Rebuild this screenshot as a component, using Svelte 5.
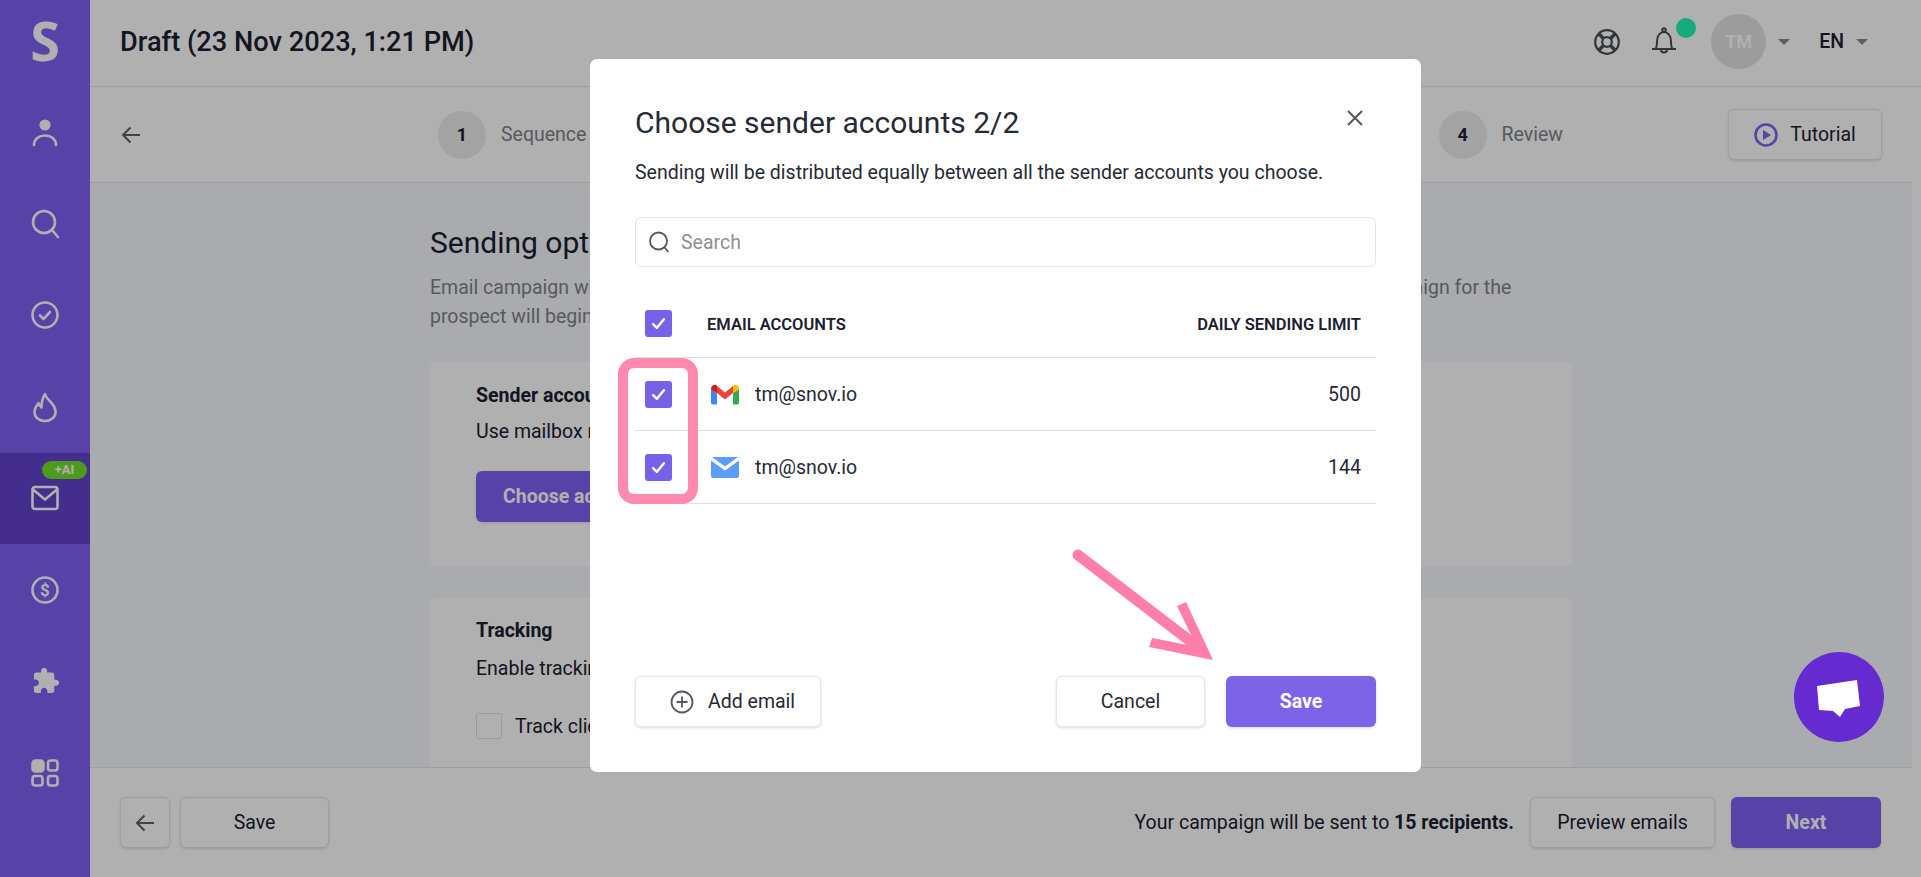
<script>
  const navTop = ['user', 'search', 'check', 'flame', 'mail', 'dollar', 'puzzle', 'grid'];
  const accounts = [
    { kind: 'gmail', email: 'tm@snov.io', limit: 500 },
    { kind: 'mail', email: 'tm@snov.io', limit: 144 }
  ];
  const steps = [
    { n: 1, label: 'Sequence' },
    { n: 2, label: 'Recipients' },
    { n: 3, label: 'Options' },
    { n: 4, label: 'Review' }
  ];
</script>

<div class="app">
  <aside class="sidebar">
    <div class="logo">S</div>
    {#each navTop as item}
      <div class="nav-item" class:active={item === 'mail'}>
        {#if item === 'mail'}<span class="ai">+AI</span>{/if}
        <svg width="32" height="32" viewBox="0 0 32 32" fill="none" stroke="#fff" stroke-width="2.6" stroke-linecap="round" stroke-linejoin="round">
          {#if item === 'user'}
            <circle cx="16" cy="9" r="5.6" fill="#fff" stroke="none" />
            <path d="M5 29c0-6 5-9.500 11-9.500S27 23 27 29" />
          {:else if item === 'search'}
            <circle cx="15" cy="14" r="11" />
            <path d="M23 22l6 7" />
          {:else if item === 'check'}
            <circle cx="16" cy="16" r="12.500" />
            <path d="M11 16.500l3.500 3.500 6.500-7" />
          {:else if item === 'flame'}
            <path d="M16 3c1 4 4 6 7 9.500 3 3.500 3.500 6 3.500 8.500 0 5.500-4.500 9-10.500 9S5.500 26.500 5.500 21c0-4 2.500-7 4-9 .5 2 1.500 3.500 3 4.500C12.500 12 13.500 7 16 3z" />
          {:else if item === 'mail'}
            <rect x="3.500" y="5" width="25" height="22" rx="2.500" />
            <path d="M4 7.500l12 10 12-10" />
          {:else if item === 'dollar'}
            <circle cx="16" cy="16" r="12.500" />
            <text x="16" y="22" text-anchor="middle" class="dollar" fill="#fff" stroke="none">$</text>
          {:else if item === 'puzzle'}
            <g transform="translate(2.500 1.500) scale(1.200)">
              <path fill="#fff" stroke="none" d="M20.500 11H19V7c0-1.100-.9-2-2-2h-4V3.500C13 2.120 11.880 1 10.500 1S8 2.120 8 3.500V5H4c-1.100 0-1.990.9-1.990 2v3.800H3.500c1.490 0 2.700 1.210 2.700 2.700s-1.210 2.700-2.700 2.700H2V20c0 1.100.9 2 2 2h3.800v-1.500c0-1.490 1.210-2.700 2.700-2.700 1.490 0 2.700 1.210 2.700 2.700V22H17c1.100 0 2-.9 2-2v-4h1.500c1.380 0 2.500-1.120 2.500-2.500S21.880 11 20.500 11z" />
            </g>
          {:else if item === 'grid'}
            <rect x="3.500" y="3.500" width="11" height="11" rx="3" fill="#fff" />
            <rect x="19" y="3.500" width="9.500" height="10" rx="2.500" />
            <rect x="3.500" y="19" width="10" height="9.500" rx="2.500" />
            <rect x="19" y="19" width="9.500" height="9.500" rx="2.500" />
          {/if}
        </svg>
      </div>
    {/each}
  </aside>

  <main class="main">
    <header class="topbar">
      <h1>Draft (23 Nov 2023, 1:21 PM)</h1>
      <div class="top-actions">
        <svg class="buoy" width="28" height="28" viewBox="0 0 28 28" fill="none" stroke="#4b4e56" stroke-width="2.200">
          <circle cx="14" cy="14" r="11.800" />
          <circle cx="14" cy="14" r="4.800" />
          <path stroke-width="3.400" d="M6 6l4.500 4.500M22 6l-4.500 4.500M6 22l4.500-4.500M22 22l-4.500-4.500" />
        </svg>
        <div class="bell">
          <svg width="30" height="30" viewBox="0 0 30 30" fill="none" stroke="#4b4e56" stroke-width="2" stroke-linejoin="round">
            <path d="M3 24h24M6.500 24c1.500-2 1.500-4 1.500-8 0-5 3-9 7-9s7 4 7 9c0 4 0 6 1.500 8" />
            <circle cx="15" cy="5" r="1.800" />
            <path d="M12 24.500c0 2 1.300 3 3 3s3-1 3-3" />
          </svg>
          <span class="dot"></span>
        </div>
        <div class="avatar">TM</div>
        <span class="caret"></span>
        <span class="lang">EN</span>
        <span class="caret"></span>
      </div>
    </header>

    <div class="stepbar">
      <svg class="back" width="20" height="20" viewBox="0 0 20 20" fill="none" stroke="#5d6066" stroke-width="2">
        <path d="M19 10H2M9.500 2.500L2 10l7.500 7.500" />
      </svg>
      <div class="steps">
        {#each steps as s}
          <div class="step"><span class="num">{s.n}</span><span class="step-label">{s.label}</span></div>
        {/each}
      </div>
      <button class="btn tutorial">
        <svg width="24" height="24" viewBox="0 0 24 24" fill="none" stroke="#7f60f3" stroke-width="2.600">
          <circle cx="12" cy="12" r="10.500" />
          <path fill="#7f60f3" stroke="none" d="M9 7l8 5-8 5z" />
        </svg>
        Tutorial
      </button>
    </div>

    <section class="content">
      <div class="column">
        <h2>Sending options</h2>
        <p class="lead">Email campaign will be sent from the selected sender accounts on your own schedule. The first email of the campaign for the<br />prospect will begin according to the selected schedule.</p>
        <div class="card first">
          <h3>Sender accounts</h3>
          <p>Use mailbox rotation to send from several accounts.</p>
          <button class="btn primary choose">Choose accounts</button>
        </div>
        <div class="card second">
          <h3>Tracking</h3>
          <p>Enable tracking to see how recipients respond.</p>
          <label class="track"><span class="box"></span>Track clicks</label>
        </div>
      </div>
    </section>

    <footer class="bottombar">
      <button class="btn square" aria-label="Back">
        <svg width="20" height="20" viewBox="0 0 20 20" fill="none" stroke="#5d6066" stroke-width="2">
          <path d="M19 10H2M9.500 2.500L2 10l7.500 7.500" />
        </svg>
      </button>
      <button class="btn save">Save</button>
      <span class="summary">Your campaign will be sent to <b>15 recipients.</b></span>
      <button class="btn preview">Preview emails</button>
      <button class="btn primary next">Next</button>
    </footer>
  </main>

  <div class="overlay">
    <div class="modal">
      <div class="modal-head">
        <h4>Choose sender accounts 2/2</h4>
        <svg width="18" height="18" viewBox="0 0 18 18" stroke="#55585f" stroke-width="2" fill="none" class="close">
          <path d="M2 2l14 14M16 2L2 16" />
        </svg>
      </div>
      <p class="modal-desc">Sending will be distributed equally between all the sender accounts you choose.</p>
      <div class="searchbox">
        <svg width="22" height="22" viewBox="0 0 22 22" fill="none" stroke="#55585f" stroke-width="1.800" stroke-linecap="round">
          <circle cx="10.500" cy="10" r="8.500" />
          <path d="M16.500 16.500l3.500 4" />
        </svg>
        <span>Search</span>
      </div>

      <div class="thead">
        <span class="cb">
          <svg width="15" height="13" viewBox="0 0 14 12" fill="none" stroke="#fff" stroke-width="2.300" stroke-linecap="round" stroke-linejoin="round"><path d="M2 6.500l3.500 3.500L12 2" /></svg>
        </span>
        <span class="th-name">Email accounts</span>
        <span class="th-limit">Daily sending limit</span>
      </div>

      <div class="rows">
        {#each accounts as a}
          <div class="row">
            <span class="cb">
              <svg width="15" height="13" viewBox="0 0 14 12" fill="none" stroke="#fff" stroke-width="2.300" stroke-linecap="round" stroke-linejoin="round"><path d="M2 6.500l3.500 3.500L12 2" /></svg>
            </span>
            {#if a.kind === 'gmail'}
              <svg class="provider" width="28" height="21" viewBox="0 0 28 21">
                <path fill="#4285f4" d="M0 5v13.500A2 2 0 0 0 2 20.500h4V9z" />
                <path fill="#34a853" d="M22 9v11.500h4a2 2 0 0 0 2-2V5z" />
                <path fill="#ea4335" d="M6 2l8 6.500L22 2v7l-8 6.500L6 9z" />
                <path fill="#c5221f" d="M0 5.500V4.500A3.800 3.800 0 0 1 6 1.500V9z" />
                <path fill="#fbbc04" d="M28 5.500V4.500A3.800 3.800 0 0 0 22 1.500V9z" />
              </svg>
            {:else}
              <svg class="provider" width="28" height="21" viewBox="0 0 28 21">
                <path fill="#5b9df9" d="M1 0h26L14 9.500z" />
                <path fill="#5b9df9" d="M0 3.500l14 10 14-10V19a2 2 0 0 1-2 2H2a2 2 0 0 1-2-2z" />
              </svg>
            {/if}
            <span class="email">{a.email}</span>
            <span class="limit">{a.limit}</span>
          </div>
        {/each}
      </div>

      <div class="modal-foot">
        <button class="mbtn add">
          <svg width="24" height="24" viewBox="0 0 24 24" fill="none" stroke="#55585f" stroke-width="1.800">
            <circle cx="12" cy="12" r="10.500" />
            <path d="M12 6.500v11M6.500 12h11" />
          </svg>
          Add email
        </button>
        <button class="mbtn cancel">Cancel</button>
        <button class="mbtn confirm">Save</button>
      </div>

      <div class="highlight"></div>
      <svg class="arrow" width="150" height="120" viewBox="0 0 150 120" fill="none">
        <path d="M8 7L124 96" stroke="#ff7fa8" stroke-width="11" stroke-linecap="round" />
        <path fill="#ff7fa8" d="M107 58L116 54 143 112 79 99 82 90 118 97 124 93z" />
      </svg>
    </div>
  </div>

  <div class="chat">
    <svg width="90" height="90" viewBox="0 0 90 90">
      <path fill="#fff" d="M23 34L63 28 66 54 51 57 46 65 39 59 25 58z" />
    </svg>
  </div>
</div>

<style>
  :global(body) {
    margin: 0;
    font-family: Roboto, "Noto Sans", sans-serif;
  }
  .app {
    position: relative;
    display: flex;
    width: 1921px;
    height: 877px;
    overflow: hidden;
    background: #fff;
    color: #1a2030;
  }
  button {
    font-family: inherit;
  }

  .sidebar {
    flex: 0 0 90px;
    background: #7f60f3;
    display: grid;
    grid-template-rows: 86.5px repeat(8, 91.5px);
    align-content: start;
  }
  .logo {
    display: flex;
    align-items: center;
    justify-content: center;
    padding-bottom: 6px;
    color: #fff;
    font: 700 54px "Open Sans", sans-serif;
  }
  .nav-item {
    position: relative;
    display: flex;
    align-items: center;
    justify-content: center;
  }
  .nav-item.active {
    background: #6143ce;
  }
  .ai {
    position: absolute;
    left: 42px;
    top: 8px;
    width: 45px;
    height: 18px;
    border-radius: 9px;
    background: #72df2b;
    color: #fff;
    font-size: 13px;
    font-weight: 700;
    line-height: 18px;
    text-align: center;
  }
  .dollar {
    font: 700 17px Roboto, sans-serif;
  }

  .main {
    flex: 1;
    min-width: 0;
    display: flex;
    flex-direction: column;
  }
  .topbar {
    flex: 0 0 87px;
    box-sizing: border-box;
    display: flex;
    align-items: center;
    justify-content: space-between;
    padding: 0 53px 3px 30px;
    border-bottom: 1px solid #e6e6e6;
  }
  h1 {
    margin: 0;
    font-size: 27.2px;
    font-weight: 500;
  }
  .top-actions {
    display: flex;
    align-items: center;
  }
  .bell {
    position: relative;
    display: flex;
    margin: -3px 32.5px 0 27.5px;
  }
  .dot {
    position: absolute;
    left: 27px;
    top: -7px;
    width: 20px;
    height: 20px;
    border-radius: 50%;
    background: #21f6b9;
  }
  .avatar {
    width: 55px;
    height: 55px;
    border-radius: 50%;
    background: #e2e2e2;
    color: #fff;
    font-size: 18px;
    font-weight: 700;
    line-height: 55px;
    text-align: center;
    margin-right: 12px;
  }
  .caret {
    width: 0;
    height: 0;
    border-left: 6px solid transparent;
    border-right: 6px solid transparent;
    border-top: 6px solid #8a8a8a;
  }
  .lang {
    margin: 0 12px 0 29px;
    font-size: 19.5px;
    font-weight: 500;
  }

  .stepbar {
    flex: 0 0 96px;
    box-sizing: border-box;
    display: flex;
    align-items: center;
    margin-right: 9px;
    padding: 0 30px 0 31px;
    border-bottom: 1px solid #e6e6e6;
  }
  .steps {
    width: 1125px;
    margin-left: 297px;
    display: flex;
    justify-content: space-between;
  }
  .step {
    display: flex;
    align-items: center;
    gap: 15px;
  }
  .num {
    width: 48px;
    height: 48px;
    border-radius: 50%;
    background: #ececec;
    font-size: 18px;
    font-weight: 700;
    line-height: 48px;
    text-align: center;
  }
  .step-label {
    color: #7f838c;
    font-size: 19.5px;
  }

  .btn {
    box-sizing: border-box;
    height: 51px;
    border: 1px solid #e6e6e6;
    border-radius: 6px;
    background: #fff;
    box-shadow: 0 1px 3px rgba(0, 0, 0, 0.12);
    color: #1a2030;
    font-size: 19.5px;
  }
  .primary {
    border: 0;
    background: #7f60f3;
    color: #fff;
    font-weight: 700;
  }
  .tutorial {
    margin-left: auto;
    width: 154px;
    display: flex;
    align-items: center;
    justify-content: center;
    gap: 12px;
  }

  .content {
    flex: 1;
    min-height: 0;
    overflow: hidden;
    margin-right: 9px;
    background: #f5f8fc;
  }
  .column {
    width: 1142px;
    margin: 0 auto;
    padding-top: 42px;
  }
  h2 {
    margin: 0;
    font-size: 30px;
    font-weight: 400;
    line-height: 36px;
  }
  .lead {
    margin: 11.500px 0 31.500px;
    color: #7f838c;
    font-size: 19.5px;
    line-height: 29px;
    white-space: nowrap;
  }
  .card {
    box-sizing: border-box;
    padding: 0 46px;
    border-radius: 6px;
    background: #fff;
    font-size: 19.5px;
  }
  .card h3 {
    margin: 0;
    font-size: 19.5px;
    font-weight: 700;
    line-height: 24px;
  }
  .card p {
    margin: 0;
    line-height: 24px;
  }
  .first {
    height: 204px;
    margin-bottom: 32px;
    padding-top: 22px;
  }
  .first p {
    margin-top: 12px;
  }
  .choose {
    display: block;
    margin-top: 27px;
    padding: 0 27px;
  }
  .second {
    height: 240px;
    padding-top: 21px;
  }
  .second p {
    margin-top: 14px;
  }
  .track {
    margin-top: 32px;
    display: flex;
    align-items: center;
    gap: 13px;
    height: 26px;
  }
  .box {
    box-sizing: border-box;
    width: 26px;
    height: 26px;
    border: 1px solid #e0e0e0;
    border-radius: 3px;
  }

  .bottombar {
    flex: 0 0 110px;
    box-sizing: border-box;
    display: flex;
    align-items: center;
    margin-right: 9px;
    padding: 0 31px 0 30px;
    border-top: 1px solid #e6e6e6;
  }
  .square {
    width: 50px;
    display: flex;
    align-items: center;
    justify-content: center;
    padding: 0;
  }
  .save {
    margin-left: 10px;
    width: 149px;
  }
  .summary {
    margin-left: auto;
    font-size: 19.5px;
  }
  .summary b {
    font-weight: 700;
  }
  .preview {
    margin-left: 16px;
    width: 185px;
  }
  .next {
    margin-left: 16px;
    width: 150px;
  }

  .overlay {
    position: absolute;
    inset: 0;
    box-sizing: border-box;
    display: flex;
    justify-content: center;
    align-items: flex-start;
    padding: 59px 0 0 90px;
    background: rgba(0, 0, 0, 0.31);
  }
  .modal {
    position: relative;
    box-sizing: border-box;
    width: 831px;
    height: 713px;
    padding: 46px 45px 45px;
    border-radius: 7px;
    background: #fff;
    display: flex;
    flex-direction: column;
  }
  .modal-head {
    display: flex;
    align-items: flex-start;
    justify-content: space-between;
  }
  h4 {
    margin: 0;
    font-size: 30px;
    font-weight: 400;
    line-height: 35px;
    color: #262a35;
  }
  .close {
    margin: 4px 12px 0 0;
  }
  .modal-desc {
    margin: 20.5px 0 0;
    font-size: 19.5px;
    line-height: 24px;
    color: #262a35;
  }
  .searchbox {
    box-sizing: border-box;
    height: 50px;
    margin-top: 32.5px;
    padding-left: 12px;
    display: flex;
    align-items: center;
    gap: 11px;
    border: 1px solid #e4e4e4;
    border-radius: 6px;
    color: #8e9096;
    font-size: 19.5px;
  }
  .thead {
    height: 91px;
    box-sizing: border-box;
    display: flex;
    align-items: flex-end;
    padding: 0 15px 20px 10px;
    border-bottom: 1px solid #dedede;
    font-size: 16.5px;
    font-weight: 600;
    text-transform: uppercase;
    color: #1a2030;
  }
  .thead .th-name {
    margin-left: 35px;
    line-height: 24px;
  }
  .th-limit {
    margin-left: auto;
    line-height: 24px;
  }
  .cb {
    flex: 0 0 27px;
    height: 27px;
    border-radius: 3px;
    background: #7562e6;
    display: flex;
    align-items: center;
    justify-content: center;
  }
  .row {
    box-sizing: border-box;
    height: 73px;
    display: flex;
    align-items: center;
    padding: 0 15px 0 10px;
    border-bottom: 1px solid #dedede;
    font-size: 19.5px;
    color: #262a35;
  }
  .provider {
    margin-left: 39px;
  }
  .email {
    margin-left: 16px;
  }
  .limit {
    margin-left: auto;
  }
  .modal-foot {
    margin-top: auto;
    display: flex;
    gap: 21px;
  }
  .mbtn {
    box-sizing: border-box;
    height: 51px;
    border: 1px solid #e6e6e6;
    border-radius: 6px;
    background: #fff;
    box-shadow: 0 1px 3px rgba(0, 0, 0, 0.15);
    color: #262a35;
    font-size: 19.5px;
  }
  .add {
    width: 186px;
    display: flex;
    align-items: center;
    gap: 14px;
    padding: 0 0 0 34px;
    margin-right: auto;
  }
  .cancel {
    width: 149px;
  }
  .confirm {
    width: 150px;
    border: 0;
    background: #7d63e8;
    color: #fff;
    font-weight: 700;
  }
  .highlight {
    position: absolute;
    left: 28px;
    top: 299px;
    box-sizing: border-box;
    width: 80px;
    height: 146px;
    border: 10px solid #ff8aae;
    border-radius: 16px;
  }
  .arrow {
    position: absolute;
    left: 480px;
    top: 489px;
  }
  .chat {
    position: absolute;
    left: 1794px;
    top: 652px;
    width: 90px;
    height: 90px;
    border-radius: 50%;
    background: #652bd0;
  }
</style>
